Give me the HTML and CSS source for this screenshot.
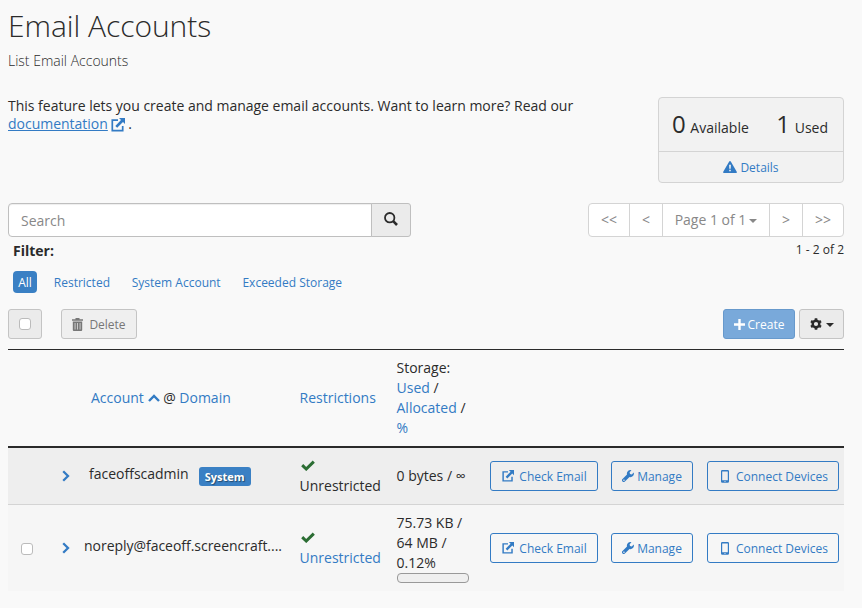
FILE: index.html
```html
<!DOCTYPE html>
<html lang="en">
<head>
<meta charset="utf-8">
<title>Email Accounts</title>
<link rel="stylesheet" href="styles.css">
</head>
<body>
<svg class="sprite" width="0" height="0" aria-hidden="true">
  <symbol id="external" viewBox="0 0 14 14"><path d="M7 2.2H1.3v10.5h10.4V8" fill="none" stroke="currentColor" stroke-width="1.7"/><path d="M8 0h6v6l-2-2-5.8 5.8-1.9-1.9L10 2z" fill="currentColor"/></symbol>
  <symbol id="wrench" viewBox="0 0 12 12"><path d="M11.7 2.5 9.8 4.4 8 4 7.6 2.2 9.5.3A3.5 3.5 0 0 0 5 4.5L.5 9a1.6 1.6 0 0 0 2.4 2.5L7.5 7a3.5 3.5 0 0 0 4.2-4.5zM1.7 9.6a.7.7 0 1 1 0 1.3.7.7 0 0 1 0-1.3z" fill="currentColor" fill-rule="evenodd"/></symbol>
  <symbol id="phone" viewBox="0 0 8 13"><path d="M1.3 0h5.4Q8 0 8 1.3v10.2q0 1.3-1.3 1.3H1.3Q0 12.800 0 11.500V1.300Q0 0 1.300 0zM1.200 1.500v8.700h5.600V1.500zM4 10.900a.6.6 0 1 0 0 1.200.6.6 0 0 0 0-1.200z" fill="currentColor" fill-rule="evenodd"/></symbol>
  <symbol id="check" viewBox="0 0 14 11"><path d="M1.200 5.200 5.200 9 12.800 1.600" fill="none" stroke="currentColor" stroke-width="3"/></symbol>
  <symbol id="chevron" viewBox="0 0 8 12"><path d="M1.200 1.200 6 6 1.200 10.800" fill="none" stroke="currentColor" stroke-width="2.300"/></symbol>
</svg>
<header class="page-header">
  <h1>Email Accounts</h1>
  <p class="subtitle">List Email Accounts</p>
</header>
<section class="intro">
  <p>This feature lets you create and manage email accounts. Want to learn more? Read our <a class="doc-link" href="#">documentation</a> <svg class="doc-icon"><use href="#external"/></svg> .</p>
  <div class="stats">
    <div class="stats-counts"><span><b>0</b> Available</span><span><b>1</b> Used</span></div>
    <a class="stats-details" href="#"><svg width="14" height="12" viewBox="0 0 14 12"><path d="M6.200.5q.8-1 1.600 0L13.900 11q.2 1-.8 1H.9q-1 0-.8-1zM6.100 3.800l.2 4h1.400l.2-4zM6.200 8.800v1.500h1.600V8.800z" fill="currentColor" fill-rule="evenodd"/></svg><span>Details</span></a>
  </div>
</section>
<section class="search-row">
  <div class="search">
    <input type="text" placeholder="Search" aria-label="Search">
    <button type="button" aria-label="Submit search"><svg width="14" height="14" viewBox="0 0 14 14"><circle cx="5.700" cy="5.700" r="4.700"/><path d="m9.200 9.200 3.800 3.800" stroke-width="2.600"/></svg></button>
  </div>
  <nav class="pager">
    <span class="edge">&lt;&lt;</span><span class="step">&lt;</span><span class="current">Page 1 of 1<i class="caret"></i></span><span class="step">&gt;</span><span class="edge">&gt;&gt;</span>
  </nav>
</section>
<section class="filter-title"><b>Filter:</b><span>1 - 2 of 2</span></section>
<nav class="filters"><a class="active" href="#">All</a><a href="#">Restricted</a><a href="#">System Account</a><a href="#">Exceeded Storage</a></nav>
<section class="toolbar">
  <span class="btn select-all"><i class="checkbox"></i></span>
  <button type="button" class="btn delete"><svg width="11" height="13" viewBox="0 0 11 13"><path d="M3.500 0h4v1.200H11v1.600H0V1.200h3.500zM.8 3.500h9.400V12q0 1-1 1H1.800q-1 0-1-1zM2.700 5v6.500h.7V5zM5.200 5v6.500h.7V5zM7.700 5v6.500h.7V5z" fill="currentColor" fill-rule="evenodd"/></svg><span>Delete</span></button>
  <button type="button" class="btn create"><svg width="11" height="11" viewBox="0 0 11 11"><path d="M5.500 0v11M0 5.500h11" stroke="currentColor" stroke-width="2.400"/></svg><span>Create</span></button>
  <button type="button" class="btn gear" aria-label="Settings"><svg width="12" height="12" viewBox="0 0 12 12"><circle cx="6" cy="6" r="3.300" fill="none" stroke="currentColor" stroke-width="2.400"/><path d="M6 .2v2M6 9.800v2M1 3.100l1.700 1M9.300 7.900l1.700 1M1 8.900l1.700-1M9.300 4.100l1.700-1" stroke="currentColor" stroke-width="2.600"/></svg><i class="caret"></i></button>
</section>
<main class="table">
  <div class="row head">
    <span></span><span></span>
    <div class="account"><a href="#">Account</a> <svg class="sort" viewBox="0 0 12 8"><path d="M1 7 6 2l5 5" fill="none" stroke="currentColor" stroke-width="2.400"/></svg> @ <a href="#">Domain</a></div>
    <div><a href="#">Restrictions</a></div>
    <div>Storage:<br><a href="#">Used</a> /<br><a href="#">Allocated</a> /<br><a href="#">%</a></div>
  </div>
  <div class="row system">
    <span></span><svg class="expand"><use href="#chevron"/></svg>
    <div class="account">faceoffscadmin<span class="badge">System</span></div>
    <div><svg class="check"><use href="#check"/></svg>Unrestricted</div>
    <div>0 bytes / ∞</div>
    <div class="actions"><a class="action mail" href="#"><svg><use href="#external"/></svg><span>Check Email</span></a><a class="action manage" href="#"><svg><use href="#wrench"/></svg><span>Manage</span></a><a class="action devices" href="#"><svg><use href="#phone"/></svg><span>Connect Devices</span></a></div>
  </div>
  <div class="row user">
    <i class="checkbox"></i><svg class="expand"><use href="#chevron"/></svg>
    <div class="account">noreply@faceoff.screencraft....</div>
    <div><svg class="check"><use href="#check"/></svg><a href="#">Unrestricted</a></div>
    <div>75.73 KB /<br>64 MB /<br>0.12%<div class="meter"></div></div>
    <div class="actions"><a class="action mail" href="#"><svg><use href="#external"/></svg><span>Check Email</span></a><a class="action manage" href="#"><svg><use href="#wrench"/></svg><span>Manage</span></a><a class="action devices" href="#"><svg><use href="#phone"/></svg><span>Connect Devices</span></a></div>
  </div>
</main>
</body>
</html>
```
FILE: styles.css
```css
* { box-sizing: border-box; }
body { margin: 0; padding: 0 18px 0 8px; height: 608px; overflow: hidden; background: #f9f9f9; color: #2b2b2b; font: 14px/20px "Open Sans", sans-serif; }
a { color: #337bc4; text-decoration: none; }
button, input { font: inherit; }
svg { flex: none; }
.sprite { display: block; }
.page-header { height: 97px; padding-top: 6px; }
h1 { margin: 0; font-size: 30px; font-weight: 300; line-height: 40px; letter-spacing: -0.05px; }
.subtitle { margin: 5px 0 0; font-size: 14px; font-weight: 300; }
.intro { display: flex; justify-content: space-between; height: 106px; }
.intro p { margin: 0; width: 600px; line-height: 18px; letter-spacing: -0.01px; }
.intro .doc-link { text-decoration: underline; }
.doc-icon { width: 14px; height: 14px; margin-left: -1px; color: #337bc4; vertical-align: -3px; }
.stats { width: 186px; height: 86px; border: 1px solid #d4d4d4; border-radius: 4px; background: #f2f2f2; }
.stats-counts { height: 54px; display: flex; justify-content: space-between; padding: 9px 15px 0 13px; border-bottom: 1px solid #d4d4d4; line-height: 34px; }
.stats-counts b { margin-right: 1px; font-size: 24px; font-weight: 400; }
.stats-details { height: 30px; display: flex; align-items: center; justify-content: center; gap: 3px; font-size: 12px; }
.stats-details span, .btn span, .action span { padding-top: 2px; }
.search-row { display: flex; justify-content: space-between; height: 34px; }
.search { display: flex; width: 403px; }
.search input { flex: 1; min-width: 0; padding: 2px 12px 0; border: 1px solid #bfbfbf; border-radius: 4px 0 0 4px; background: #fff; box-shadow: inset 0 1px 1px #eee; }
.search input::placeholder { color: #888; opacity: 1; }
.search button { width: 40px; margin-left: -1px; padding: 0 0 2px; display: flex; align-items: center; justify-content: center; border: 1px solid #bfbfbf; border-radius: 0 3px 3px 0; background: #ebebeb; }
.search button svg { fill: none; stroke: #2b2b2b; stroke-width: 1.800; }
.pager { display: flex; width: 256px; border: 1px solid #d4d4d4; border-radius: 4px; background: #fff; color: #888; line-height: 32px; text-align: center; }
.pager span + span { border-left: 1px solid #d4d4d4; }
.edge { width: 40px; }
.pager .edge + .step, .pager .step { width: 33px; }
.pager .edge:last-child { width: 41px; }
.current { flex: 1; }
.caret { display: inline-block; border: 4px solid transparent; border-top-color: currentColor; border-bottom: 0; vertical-align: 2px; margin-left: 3px; }
.filter-title { display: flex; justify-content: space-between; height: 34px; padding: 4px 0 0 5px; }
.filter-title span { font-size: 12px; line-height: 18px; }
.filters { display: flex; align-items: center; height: 22px; padding-left: 5px; gap: 21.800px; font-size: 12px; line-height: 22px; }
.filters a { padding-top: 2px; }
.filters .active { width: 24px; height: 22px; padding-top: 1px; margin-right: -5px; border-radius: 4px; background: #3a80c4; color: #fff; text-align: center; }
.toolbar { display: flex; height: 56px; padding-top: 16px; }
.btn { height: 30px; display: flex; align-items: center; justify-content: center; padding: 0; border: 1px solid #c4c4c4; border-radius: 3px; background: #ebebeb; color: #2b2b2b; font-size: 12px; }
.select-all { width: 34px; }
.checkbox { width: 12px; height: 12px; border: 1px solid #bbb; border-radius: 3px; background: #fff; }
.delete { width: 76px; margin-left: 19px; gap: 6px; background: #efefef; color: #777; }
.create { width: 72px; margin-left: auto; gap: 3px; border-color: #6799cc; background: #79a9da; color: #fff; }
.gear { width: 45px; margin-left: 4px; gap: 1px; }
.gear .caret { margin-top: 2px; }
.table { border-top: 1px solid #2b2b2b; }
.row { display: grid; grid-template-columns: 54px 22px 215.500px 97px 93px 354px; align-items: center; }
.head { height: 98px; border-bottom: 2px solid #2b2b2b; }
.head .account { padding-left: 7px; }
.sort { width: 12px; height: 8px; vertical-align: 1px; color: #337bc4; }
.system { height: 57px; border-bottom: 1px solid #d4d4d4; background: #eee; }
.user { height: 86px; background: #f6f6f6; }
.user > .checkbox { margin: 2px 0 0 13px; }
.system .account { padding: 0 0 3px 5px; }
.user .account { padding-bottom: 4px; letter-spacing: -0.03px; }
.badge { display: inline-block; height: 19px; margin-left: 10px; padding: 0 6px; border-radius: 3px; background: #3a80c4; color: #fff; font-size: 11px; font-weight: 700; line-height: 19px; text-shadow: 1px 1px 1px #244a6d; vertical-align: -2px; }
.expand { width: 8px; height: 12px; color: #337bc4; }
.check { display: block; width: 14px; height: 11px; margin: 4px 0 5px 1px; color: #2b6d33; }
.meter { width: 72px; height: 10px; border: 1px solid #999; border-radius: 4px; background: #efefef; }
.actions { display: flex; }
.action { height: 30px; display: flex; align-items: center; justify-content: center; border: 1px solid #337bc4; border-radius: 3px; font-size: 12px; }
.mail { width: 108px; margin-right: 13px; padding-left: 2px; gap: 5px; }
.mail svg { width: 12px; height: 12px; }
.manage { width: 82px; margin-right: 14px; padding-left: 1px; gap: 3px; }
.manage svg { width: 12px; height: 12px; }
.devices { width: 132px; padding-left: 4px; gap: 7px; }
.devices svg { width: 8px; height: 13px; }
```
